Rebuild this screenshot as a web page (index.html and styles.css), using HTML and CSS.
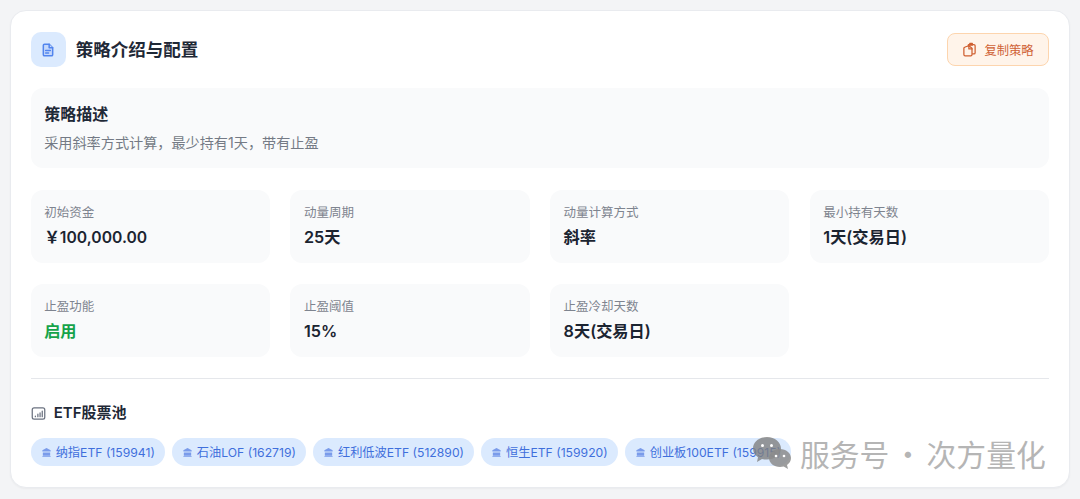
FILE: index.html
```html
<!DOCTYPE html>
<html lang="zh-CN">

<head>
	<meta charset="UTF-8">
	<meta name="viewport" content="width=device-width, initial-scale=1.0">
	<title>策略介绍与配置</title>
	<link rel="stylesheet" href="styles.css">
</head>

<body>
	<section class="card">
		<header class="head">
			<div class="head-left">
				<span class="head-icon">
					<svg width="14" height="14" viewBox="0 0 24 24" fill="#c6d9fb" stroke="#5285ee" stroke-width="2.600" stroke-linecap="round" stroke-linejoin="round">
						<path d="M14 2H6a2 2 0 0 0-2 2v16a2 2 0 0 0 2 2h12a2 2 0 0 0 2-2V8z"/>
						<path d="M14 2v6h6"/>
						<path d="M8 13h8M8 17h5"/>
					</svg>
				</span>
				<h2>策略介绍与配置</h2>
			</div>
			<a class="copy-btn">
				<svg width="15" height="15" viewBox="0 0 24 24" fill="none" stroke="#cf5f30" stroke-width="2" stroke-linecap="round" stroke-linejoin="round">
					<path d="M10 6V5a1 1 0 0 1 1-1h8a2 2 0 0 1 2 2v11a2 2 0 0 1-2 2h-2"/>
					<path d="M12.500 2h4v3h-4z"/>
					<path d="M5 8l6-2 5 4v10a2 2 0 0 1-2 2H5a2 2 0 0 1-2-2V10a2 2 0 0 1 2-2z"/>
					<path d="M11 6v5h5"/>
				</svg>
				复制策略
			</a>
		</header>

		<div class="desc">
			<h3>策略描述</h3>
			<p>采用斜率方式计算，最少持有1天，带有止盈</p>
		</div>

		<div class="stats">
			<div class="stat"><span>初始资金</span><b class="money">￥100,000.00</b></div>
			<div class="stat"><span>动量周期</span><b>25天</b></div>
			<div class="stat"><span>动量计算方式</span><b>斜率</b></div>
			<div class="stat"><span>最小持有天数</span><b>1天(交易日)</b></div>
			<div class="stat"><span>止盈功能</span><b class="on">启用</b></div>
			<div class="stat"><span>止盈阈值</span><b>15%</b></div>
			<div class="stat"><span>止盈冷却天数</span><b>8天(交易日)</b></div>
		</div>

		<div class="pool">
			<h3 class="pool-title">
				<svg width="15" height="15" viewBox="0 0 24 24" fill="none" stroke="#6b7280" stroke-width="2" stroke-linecap="round">
					<rect x="2" y="3" width="20" height="18" rx="3"/>
					<path d="M7 17v-1M11 17v-4M14.500 17v-6M18 17V8"/>
				</svg>
				ETF股票池
			</h3>
			<div class="tags">
				<span class="tag"><svg class="bank" viewBox="0 0 12 12"><path d="M6 1 1.500 3.600V5h9V3.600zM2 6h8v3.500H2zM1.500 10h9v1h-9z"/></svg>纳指ETF (159941)</span>
				<span class="tag"><svg class="bank" viewBox="0 0 12 12"><path d="M6 1 1.500 3.600V5h9V3.600zM2 6h8v3.500H2zM1.500 10h9v1h-9z"/></svg>石油LOF (162719)</span>
				<span class="tag"><svg class="bank" viewBox="0 0 12 12"><path d="M6 1 1.500 3.600V5h9V3.600zM2 6h8v3.500H2zM1.500 10h9v1h-9z"/></svg>红利低波ETF (512890)</span>
				<span class="tag"><svg class="bank" viewBox="0 0 12 12"><path d="M6 1 1.500 3.600V5h9V3.600zM2 6h8v3.500H2zM1.500 10h9v1h-9z"/></svg>恒生ETF (159920)</span>
				<span class="tag"><svg class="bank" viewBox="0 0 12 12"><path d="M6 1 1.500 3.600V5h9V3.600zM2 6h8v3.500H2zM1.500 10h9v1h-9z"/></svg>创业板100ETF (159915)</span>
			</div>
		</div>
	</section>

	<!-- watermark -->
	<div class="mark">
		<svg width="40" height="34" viewBox="0 0 40 34">
			<path d="M15 1C7 1 1 6.200 1 12.500c0 3.700 2 6.800 5 8.800L5 26l5-3c1.500.4 3 .6 5 .6 7.500 0 14-5 14-11.100S23 1 15 1z" fill="#7f7f7f" opacity=".8"/>
			<path d="M28 13c-6 0-11 4-11 9s5 9 11 9c1.300 0 2.500-.2 3.700-.5L36 33l-1-4c2.500-1.700 4-4.200 4-7 0-5-5-9-11-9z" fill="#8c8c8c" opacity=".85"/>
			<circle cx="10.500" cy="9.500" r="1.500" fill="#fff"/>
			<circle cx="19.500" cy="9.500" r="1.500" fill="#fff"/>
			<circle cx="24" cy="20" r="1.300" fill="#fff"/>
			<circle cx="32" cy="20" r="1.300" fill="#fff"/>
		</svg>
		<span>服务号 · 次方量化</span>
	</div>
</body>

</html>
```

FILE: styles.css
```css
* {
	margin: 0;
	padding: 0;
	box-sizing: border-box;
}

html,
body {
	width: 100%;
	height: 100%;
	overflow: hidden;
}

body {
	padding: 10px 10px 11px;
	background: #f3f4f6;
	font-family: Inter, "Noto Sans CJK SC", sans-serif;
	color: #1f2937;
}

.card {
	height: 478px;
	padding: 21px 20px 20px 19.700px;
	background: #fff;
	border: 1px solid #e9ebef;
	border-radius: 16px;
	box-shadow: 0 1px 2px rgba(0, 0, 0, .04);
}

.head {
	display: flex;
	justify-content: space-between;
	align-items: center;
	height: 35px;
	margin-bottom: 21px;
}

.head-left {
	display: flex;
	align-items: center;
	gap: 10px;
}

.head-icon {
	display: flex;
	justify-content: center;
	align-items: center;
	width: 35px;
	height: 35px;
	background: #dbeafe;
	border-radius: 10px;
}

h2 {
	font-size: 17.500px;
	font-weight: 600;
	line-height: 28px;
}

.copy-btn {
	display: flex;
	align-items: center;
	justify-content: center;
	gap: 7px;
	width: 102px;
	height: 33px;
	font-size: 12.300px;
	color: #cf6236;
	background: #fff4ea;
	border: 1px solid #fdd5ae;
	border-radius: 8px;
}

.desc {
	height: 80px;
	padding: 14px 13.500px;
	margin-bottom: 22px;
	background: #f9fafb;
	border-radius: 12px;
}

.desc h3 {
	font-size: 16px;
	font-weight: 600;
	line-height: 24px;
	margin-bottom: 7px;
}

.desc p {
	font-size: 14.150px;
	line-height: 20px;
	color: #747a85;
}

.stats {
	display: grid;
	grid-template-columns: repeat(4, 1fr);
	gap: 21px 20.500px;
	padding-bottom: 21px;
	border-bottom: 1px solid #e5e7eb;
}

.stat {
	height: 73px;
	padding: 13px 13.500px;
	background: #f9fafb;
	border-radius: 12px;
}

.stat span {
	display: block;
	font-size: 12.500px;
	line-height: 20px;
	color: #7e848f;
}

.stat b {
	display: block;
	font-size: 16.200px;
	font-weight: 600;
	line-height: 25px;
	margin-top: 2px;
	color: #1b2431;
}

.stat .money {
	font-size: 15.700px;
}

.stat .on {
	color: #16a34a;
}

.pool {
	padding-top: 22px;
}

.pool-title {
	display: flex;
	align-items: center;
	gap: 8px;
	font-size: 15px;
	font-weight: 600;
	line-height: 24px;
	margin-bottom: 13px;
}

.tags {
	display: flex;
	gap: 7px;
}

.tag {
	display: flex;
	align-items: center;
	gap: 4px;
	height: 28px;
	padding: 0 10px;
	font-size: 12.200px;
	color: #3f6fdc;
	background: #dbeafe;
	border-radius: 14px;
	white-space: nowrap;
}

.bank {
	width: 11px;
	height: 11px;
	fill: #7a9bea;
}

.mark {
	position: absolute;
	left: 752px;
	top: 436px;
	display: flex;
	align-items: center;
	gap: 8px;
	font-family: "Noto Sans CJK SC", sans-serif;
	font-size: 29.800px;
	line-height: 34px;
	word-spacing: -3px;
	color: #b5b5b5;
	white-space: nowrap;
}
```
